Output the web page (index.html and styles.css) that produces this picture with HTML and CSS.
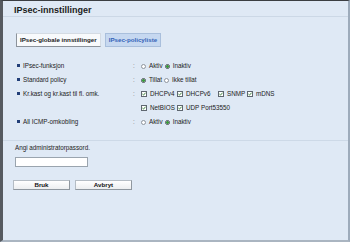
FILE: index.html
```html
<!DOCTYPE html>
<html lang="no">
<head>
    <meta charset="UTF-8">
    <meta name="viewport" content="width=device-width, initial-scale=1.0">
    <title>IPsec-innstillinger</title>
    <link rel="stylesheet" href="styles.css">
</head>
<body>
    <div class="frame">
        <h1 class="title">IPsec-innstillinger</h1>

        <div class="tabs">
            <span class="tab active">IPsec-globale innstillinger</span>
            <span class="tab">IPsec-policyliste</span>
        </div>

        <div class="settings">
            <div class="row">
                <span class="bullet"></span>
                <span class="label">IPsec-funksjon</span>
                <span class="colon">:</span>
                <div class="choices">
                    <span class="opt"><span class="radio"></span>Aktiv</span>
                    <span class="opt"><span class="radio on"></span>Inaktiv</span>
                </div>
            </div>
            <div class="row">
                <span class="bullet"></span>
                <span class="label">Standard policy</span>
                <span class="colon">:</span>
                <div class="choices">
                    <span class="opt"><span class="radio on"></span>Tillat</span>
                    <span class="opt"><span class="radio"></span>Ikke tillat</span>
                </div>
            </div>
            <div class="row tall">
                <span class="bullet"></span>
                <span class="label">Kr.kast og kr.kast til fl. omk.</span>
                <span class="colon">:</span>
                <div class="checks">
                    <span class="opt"><svg class="box" viewBox="0 0 6 6"><rect x="0.5" y="0.5" width="5" height="5" fill="#fff" stroke="#5f6770"/><path d="M1.4 3l1.1 1.1 2.1-2.4" fill="none" stroke="#2e7a2e" stroke-width="0.9"/></svg>DHCPv4</span>
                    <span class="opt"><svg class="box" viewBox="0 0 6 6"><rect x="0.5" y="0.5" width="5" height="5" fill="#fff" stroke="#5f6770"/><path d="M1.4 3l1.1 1.1 2.1-2.4" fill="none" stroke="#2e7a2e" stroke-width="0.9"/></svg>DHCPv6</span>
                    <span class="opt"><svg class="box" viewBox="0 0 6 6"><rect x="0.5" y="0.5" width="5" height="5" fill="#fff" stroke="#5f6770"/><path d="M1.4 3l1.1 1.1 2.1-2.4" fill="none" stroke="#2e7a2e" stroke-width="0.9"/></svg>SNMP</span>
                    <span class="opt"><svg class="box" viewBox="0 0 6 6"><rect x="0.5" y="0.5" width="5" height="5" fill="#fff" stroke="#5f6770"/><path d="M1.4 3l1.1 1.1 2.1-2.4" fill="none" stroke="#2e7a2e" stroke-width="0.9"/></svg>mDNS</span>
                    <span class="opt"><svg class="box" viewBox="0 0 6 6"><rect x="0.5" y="0.5" width="5" height="5" fill="#fff" stroke="#5f6770"/><path d="M1.4 3l1.1 1.1 2.1-2.4" fill="none" stroke="#2e7a2e" stroke-width="0.9"/></svg>NetBIOS</span>
                    <span class="opt wide"><svg class="box" viewBox="0 0 6 6"><rect x="0.5" y="0.5" width="5" height="5" fill="#fff" stroke="#5f6770"/><path d="M1.4 3l1.1 1.1 2.1-2.4" fill="none" stroke="#2e7a2e" stroke-width="0.9"/></svg>UDP Port53550</span>
                </div>
            </div>
            <div class="row">
                <span class="bullet"></span>
                <span class="label">All ICMP-omkobling</span>
                <span class="colon">:</span>
                <div class="choices">
                    <span class="opt"><span class="radio"></span>Aktiv</span>
                    <span class="opt"><span class="radio on"></span>Inaktiv</span>
                </div>
            </div>
        </div>

        <hr class="sep">

        <div class="auth">
            <p class="prompt">Angi administratorpassord.</p>
            <input class="password" type="password">
            <div class="actions">
                <button class="btn">Bruk</button>
                <button class="btn">Avbryt</button>
            </div>
        </div>
    </div>
</body>
</html>
```

FILE: styles.css
```css
body {
    margin: 0;
    font-family: "Liberation Sans", Arial, sans-serif;
    font-size: 6.3px;
    color: #222;
}
.frame {
    box-sizing: border-box;
    width: 350px;
    height: 242px;
    background-color: #dfe9f5;
    border-left: 3px solid #565a60;
    border-top: 1px solid #3b3e42;
    border-right: 2px solid #9dabbb;
    border-bottom: 2px solid #aab5c1;
}
.title {
    margin: 0;
    padding: 4px 0 0 11px;
    height: 11px;
    line-height: 11px;
    font-size: 9px;
    font-weight: bold;
    color: #1b1b1b;
    border-bottom: 1px solid #ccd8e6;
}
.tabs {
    display: flex;
    gap: 4px;
    margin: 16px 0 0 13px;
    height: 14px;
}
.tab {
    box-sizing: border-box;
    height: 14px;
    line-height: 12px;
    padding: 0 3px;
    font-size: 6.2px;
    font-weight: bold;
    color: #3463b8;
    background-color: #c6d8f0;
    border: 1px solid #a9bfdc;
}
.tab.active {
    color: #222;
    background-color: #f8fafc;
    border-color: #d4dbe3;
    border-left-color: #8c939b;
    border-bottom-color: #8c939b;
}
.settings {
    margin: 12px 0 0 14px;
}
.row {
    display: grid;
    grid-template-columns: 6px 110px 8px auto;
    align-items: start;
    line-height: 14px;
}
.bullet {
    width: 3px;
    height: 3px;
    margin-top: 5px;
    background-color: #223f78;
}
.colon {
    color: #808080;
}
.choices {
    display: flex;
    gap: 2px;
    height: 14px;
}
.checks {
    display: grid;
    grid-template-columns: 36px 41px 29px auto;
    grid-auto-rows: 14px;
}
.opt {
    display: inline-flex;
    align-items: center;
    gap: 3px;
    white-space: nowrap;
}
.opt.wide {
    grid-column: span 3;
}
.radio {
    box-sizing: border-box;
    width: 5px;
    height: 5px;
    border: 1px solid #8e959d;
    border-radius: 50%;
    background-color: #fff;
}
.radio.on {
    border-color: #4f555c;
    background: radial-gradient(circle, #39a03a 0 1.1px, #fff 1.6px);
}
.box {
    width: 6px;
    height: 6px;
}
.sep {
    margin: 11px 0 0 0;
    border: none;
    border-top: 1px solid #cdd9e7;
}
.auth {
    padding-left: 12px;
}
.prompt {
    margin: 4px 0 0 0;
    line-height: 6px;
}
.password {
    display: block;
    box-sizing: border-box;
    width: 73px;
    height: 10px;
    margin-top: 6px;
    padding: 0;
    background-color: #fff;
    border: 1px solid #9aa4ae;
}
.actions {
    display: flex;
    gap: 5px;
    margin: 13px 0 0 -2px;
}
.btn {
    box-sizing: border-box;
    width: 57px;
    height: 10px;
    padding: 0;
    font-family: inherit;
    font-size: 6.2px;
    font-weight: bold;
    line-height: 8px;
    color: #111;
    background: linear-gradient(#ffffff, #eceef0);
    border: 1px solid #b4bcc4;
    border-right-color: #8f979f;
    border-bottom-color: #8f979f;
}
```
